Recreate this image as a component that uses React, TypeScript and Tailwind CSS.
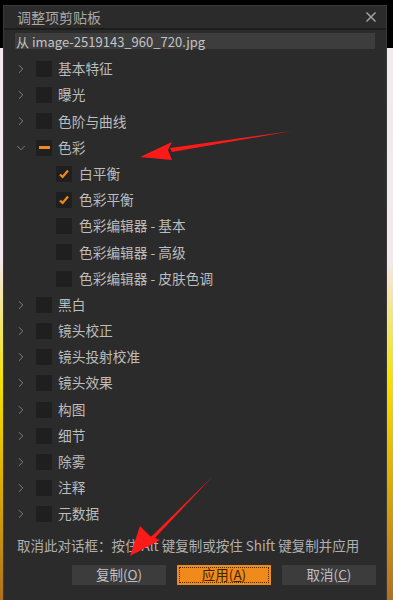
import { ChevronRight, ChevronDown, X } from "lucide-react";

type Row = {
  label: string;
  level: 0 | 1;
  open?: boolean;
  state?: "none" | "check" | "partial";
};

const rows: Row[] = [
  { label: "基本特征", level: 0 },
  { label: "曝光", level: 0 },
  { label: "色阶与曲线", level: 0 },
  { label: "色彩", level: 0, open: true, state: "partial" },
  { label: "白平衡", level: 1, state: "check" },
  { label: "色彩平衡", level: 1, state: "check" },
  { label: "色彩编辑器 - 基本", level: 1 },
  { label: "色彩编辑器 - 高级", level: 1 },
  { label: "色彩编辑器 - 皮肤色调", level: 1 },
  { label: "黑白", level: 0 },
  { label: "镜头校正", level: 0 },
  { label: "镜头投射校准", level: 0 },
  { label: "镜头效果", level: 0 },
  { label: "构图", level: 0 },
  { label: "细节", level: 0 },
  { label: "除雾", level: 0 },
  { label: "注释", level: 0 },
  { label: "元数据", level: 0 },
];

function Box({ state }: { state?: Row["state"] }) {
  return (
    <span className="w-[16px] h-[16px] bg-[#1f1f1f] flex items-center justify-center shrink-0">
      {state === "partial" && <span className="w-[11px] h-[3px] bg-[#f08a1c]" />}
      {state === "check" && (
        <svg width="12" height="12" viewBox="0 0 12 12">
          <path d="M2 6.5 L4.6 9 L10 2.5" fill="none" stroke="#f08a1c" strokeWidth="2.2" />
        </svg>
      )}
    </span>
  );
}

function TreeRow({ row }: { row: Row }) {
  if (row.level === 1) {
    return (
      <div className="h-[26.2px] flex items-center pl-[52px]">
        <Box state={row.state} />
        <span className="ml-[7px]">{row.label}</span>
      </div>
    );
  }
  return (
    <div className="h-[26.2px] flex items-center pl-[10px]">
      <span className="w-[14px] flex justify-center text-[#8a8a8a]">
        {row.open ? <ChevronDown size={14} strokeWidth={1.5} /> : <ChevronRight size={14} strokeWidth={1.5} />}
      </span>
      <span className="ml-[8px]">
        <Box state={row.state} />
      </span>
      <span className="ml-[6px]">{row.label}</span>
    </div>
  );
}

export default function App() {
  return (
    <div
      className="relative w-[393px] h-[600px] overflow-hidden bg-[linear-gradient(180deg,#000_0px,#000_48px,#f2eaf0_48px,#f3e8ef_260px,#f5e200_380px,#e0b400_470px,#b07020_600px)] flex justify-start"
      style={{ fontFamily: '"Noto Sans CJK SC", "Noto Sans", sans-serif' }}
    >
      <div className="mt-[5px] ml-[3px] w-[384px] h-[595px] bg-[#2b2b2b] border-l border-r border-t border-[#3a3a3a] flex flex-col">
        <div className="h-[24px] flex items-center justify-between pl-[13px] pr-[7px] border-b-2 border-[#1c1c1c] text-[#a8a8a8] text-[14px]">
          <span>调整项剪贴板</span>
          <X size={16} strokeWidth={2.5} className="text-[#a0a0a0]" />
        </div>
        <div className="mx-[11px] mt-[3px] h-[16px] bg-[#3d3d3d] flex items-center pl-[1px] text-[13px] text-[#c4c4c4] leading-none">
          从 image-2519143_960_720.jpg
        </div>
        <div className="mt-[7px] text-[13.7px] text-[#bdbdbd] leading-none">
          {rows.map((r) => (
            <TreeRow key={r.label} row={r} />
          ))}
        </div>
        <div className="mt-[12px] pl-[13px] text-[13.5px] text-[#b0b0b0] leading-none whitespace-nowrap">
          取消此对话框：按住 Alt 键复制或按住 Shift 键复制并应用
        </div>
        <div className="mt-[12px] flex justify-end gap-[11px] pr-[10px] text-[13.5px] leading-none">
          <button className="w-[94px] h-[20px] bg-[#3c3c3c] text-[#c0c0c0]">
            复制(<span className="underline">O</span>)
          </button>
          <button className="w-[94px] h-[20px] bg-[#f08a1c] text-[#3a2400] p-[2px]">
            <span className="w-full h-full flex items-center justify-center border border-dotted border-[#4a2c00]">
              应用(<span className="underline">A</span>)
            </span>
          </button>
          <button className="w-[94px] h-[20px] bg-[#3c3c3c] text-[#c0c0c0]">
            取消(<span className="underline">C</span>)
          </button>
        </div>
      </div>
      <svg className="absolute inset-0 pointer-events-none" width="393" height="600" viewBox="0 0 393 600">
        <polygon points="292,131 170,148 172,152" fill="#ff1a1a" />
        <polygon points="140,157 172,142 168,150 172,160" fill="#ff1a1a" />
        <polygon points="213,476 150,538 153,540" fill="#ff1a1a" />
        <polygon points="130,556 140,526 150,536 160,540" fill="#ff1a1a" />
      </svg>
    </div>
  );
}
